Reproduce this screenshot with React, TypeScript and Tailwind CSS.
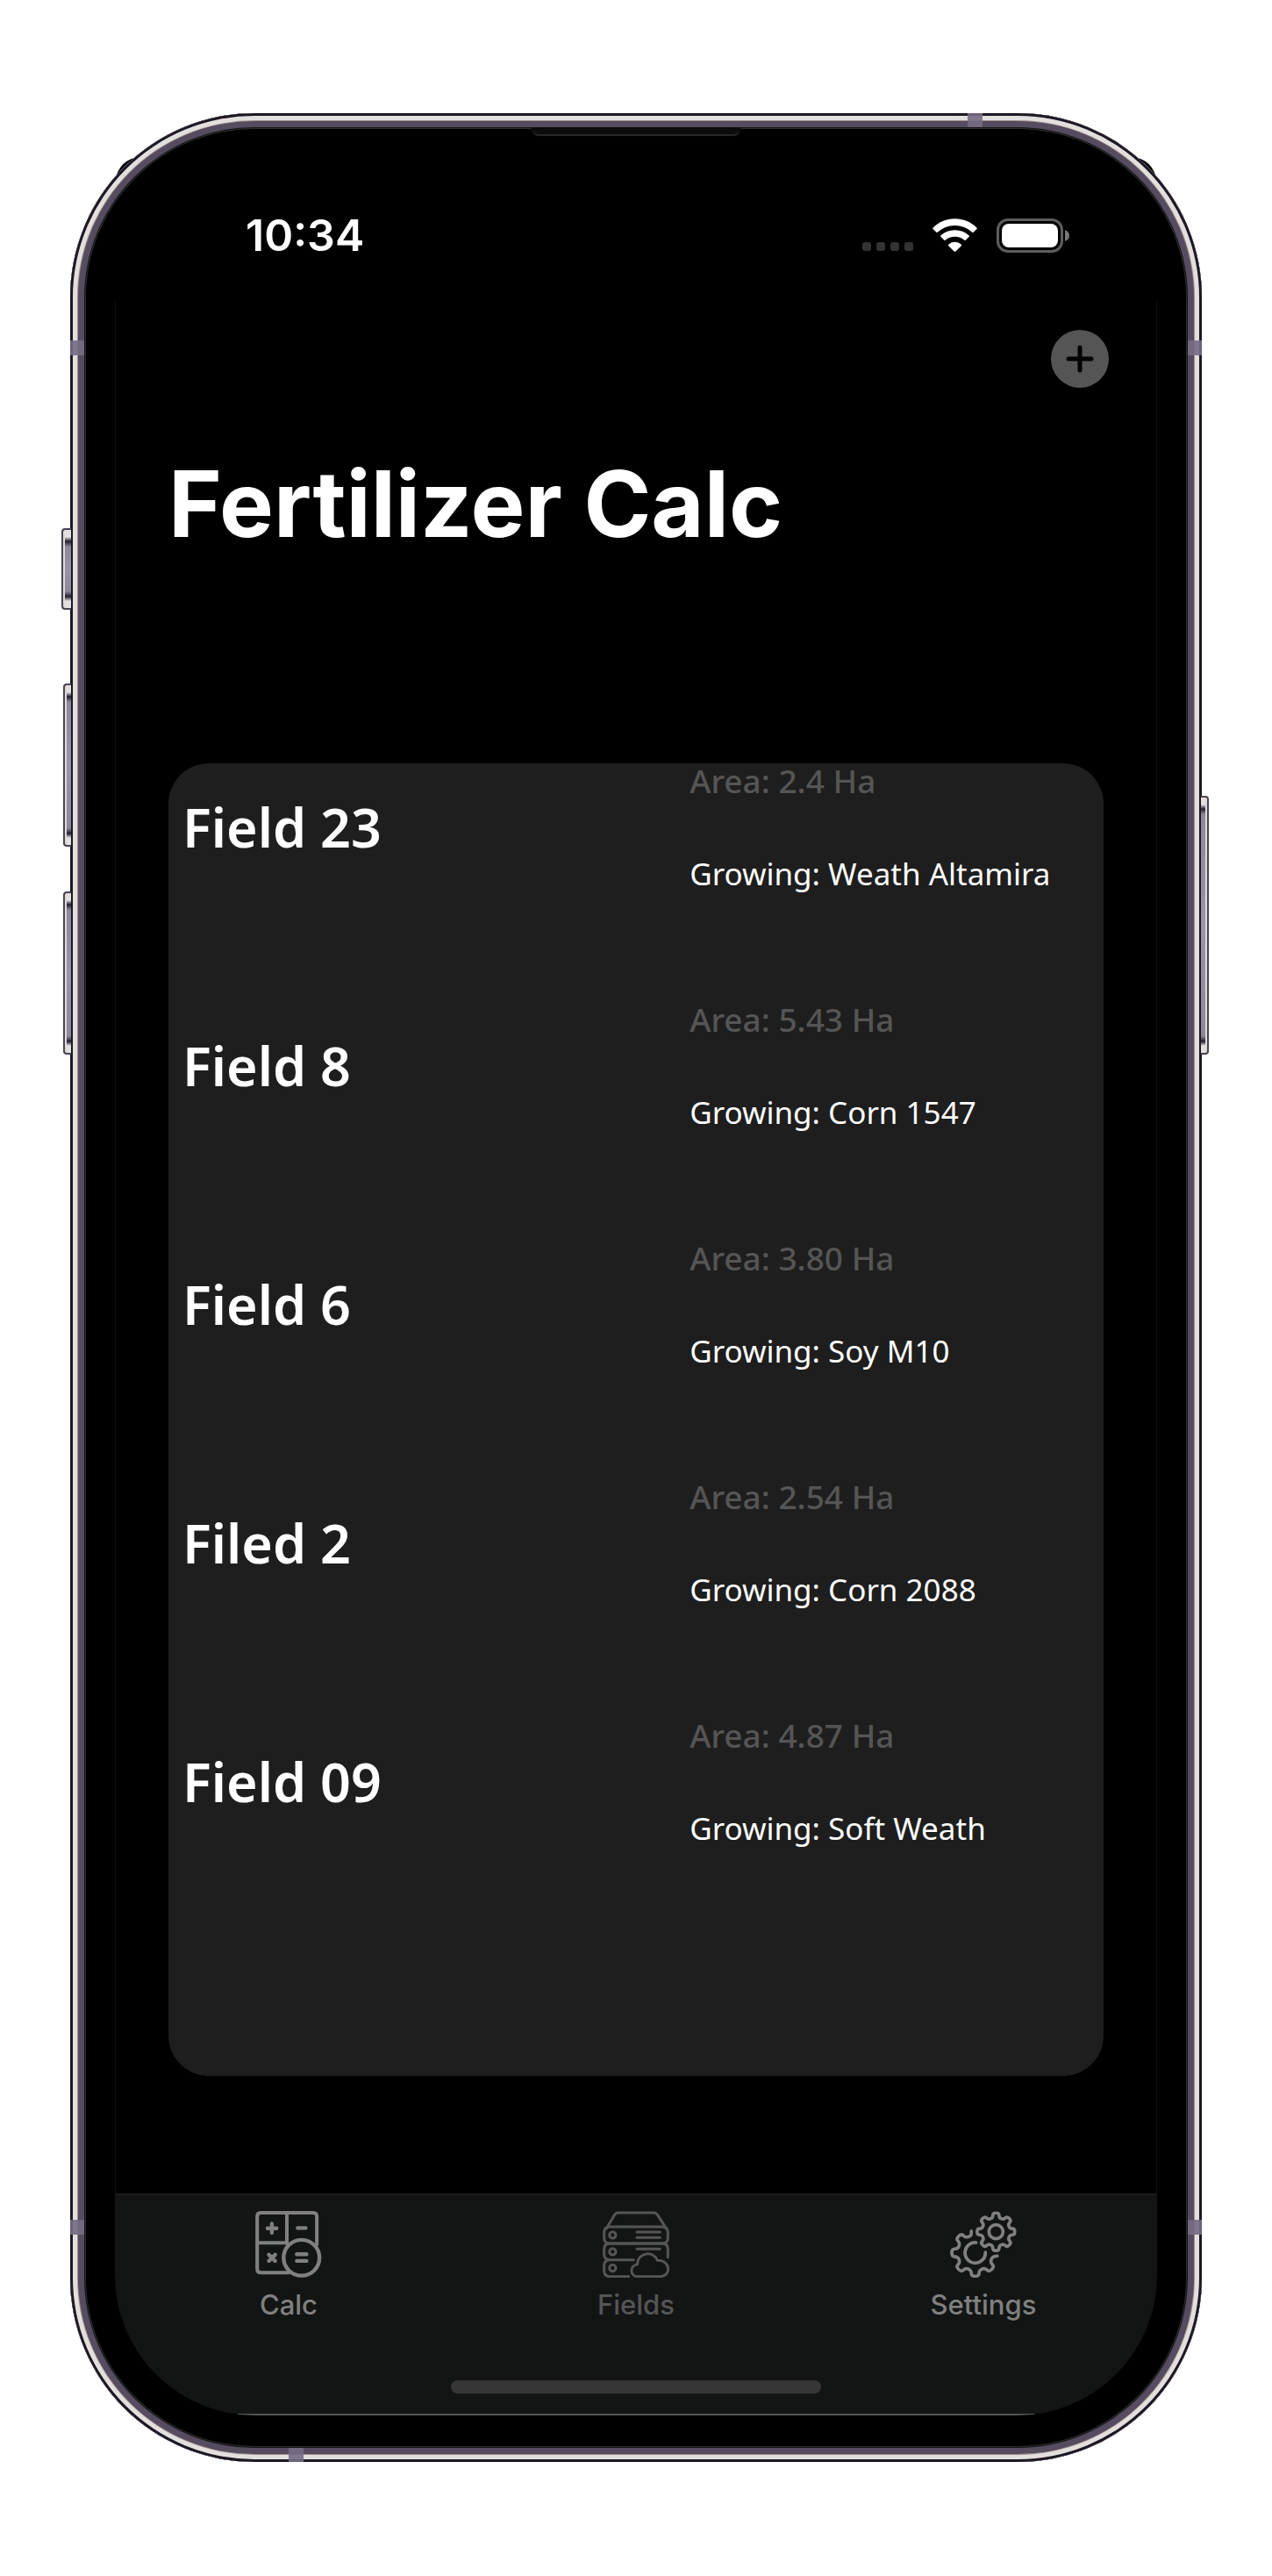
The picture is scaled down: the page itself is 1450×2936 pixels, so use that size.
import type { ReactNode } from "react";

type Point = [number, number];

const fields = [
  { name: "Field 23", area: "2.4", crop: "Weath Altamira" },
  { name: "Field 8", area: "5.43", crop: "Corn 1547" },
  { name: "Field 6", area: "3.80", crop: "Soy M10" },
  { name: "Filed 2", area: "2.54", crop: "Corn 2088" },
  { name: "Field 09", area: "4.87", crop: "Soft Weath" },
];

function polar(cx: number, cy: number, r: number, deg: number): Point {
  const a = (deg * Math.PI) / 180;
  return [cx + r * Math.cos(a), cy + r * Math.sin(a)];
}

// Joins the points with straight edges and rounds every corner.
function roundedPath(points: Point[], closed: boolean) {
  const n = points.length;
  const mix = (p: Point, q: Point, t: number): Point => [p[0] + (q[0] - p[0]) * t, p[1] + (q[1] - p[1]) * t];
  const str = (p: Point) => `${p[0].toFixed(2)} ${p[1].toFixed(2)}`;
  let d = "";
  for (let i = 0; i < n; i++) {
    const p = points[i];
    if (!closed && (i === 0 || i === n - 1)) {
      d += `${i === 0 ? "M" : "L"}${str(p)}`;
      continue;
    }
    const before = mix(p, points[(i - 1 + n) % n], 0.45);
    const after = mix(p, points[(i + 1) % n], 0.45);
    d += `${d === "" ? "M" : "L"}${str(before)}Q${str(p)} ${str(after)}`;
  }
  return closed ? d + "Z" : d;
}

function teeth(cx: number, cy: number, outer: number, inner: number, angles: number[]) {
  return angles.flatMap((a) => [
    polar(cx, cy, inner, a - 13),
    polar(cx, cy, outer, a - 9),
    polar(cx, cy, outer, a + 9),
    polar(cx, cy, inner, a + 13),
  ]);
}

const smallGear = roundedPath(teeth(177, 86, 65, 49, [0, 45, 90, 135, 180, 225, 270, 315]), true);
const largeGear = roundedPath(
  [
    polar(106, 158, 76, 8),
    polar(106, 158, 60, 13),
    ...teeth(106, 158, 81, 61, [45, 90, 135, 180, 225]),
    polar(106, 158, 60, 257),
    polar(106, 158, 76, 260),
  ],
  false,
);

function CalcIcon() {
  return (
    <svg viewBox="693 181 226 227" className="h-[76px] w-[76px]" fill="none" stroke="currentColor" strokeWidth="12" strokeLinecap="round" aria-hidden="true">
      <path d="M806 391H712Q699 391 699 378V200Q699 187 712 187H889Q902 187 902 200V296" />
      <path d="M800 187V292M699 289H801" />
      <circle cx="850" cy="340" r="61" strokeWidth="13" />
      <path d="M734 240H765M749 224V255M837 239H864M739 330L760 351M760 330L739 351M834 328H867M834 351H867" strokeWidth="13" />
    </svg>
  );
}

function FieldsIcon() {
  return (
    <svg viewBox="18 15 228 228" className="h-[76px] w-[76px]" fill="none" stroke="currentColor" strokeWidth="9" strokeLinecap="round" strokeLinejoin="round" aria-hidden="true">
      <path d="M31 74L58 29Q63 21 72 21H192Q201 21 206 29L235 74" />
      <path d="M40 69H224Q241 72 241 88V107Q241 124 224 126H40Q23 124 23 107V88Q23 72 40 69Z" />
      <path d="M124 182H40Q23 180 23 163V145Q23 128 40 126H224Q241 128 241 145V173" />
      <path d="M107 239H42Q23 239 23 220V201Q23 184 40 182" />
      <circle cx="52" cy="97" r="11" />
      <circle cx="52" cy="154" r="11" />
      <circle cx="52" cy="210" r="11" />
      <path d="M135 87H214M135 106H214M135 145H214" />
      <path d="M138 239C110 239 110 201 136 198C140 153 194 151 205 184C252 182 253 239 214 239Z" />
    </svg>
  );
}

function SettingsIcon() {
  return (
    <svg viewBox="20 15 228 228" className="h-[76px] w-[76px]" fill="none" stroke="currentColor" strokeWidth="11" strokeLinecap="round" strokeLinejoin="round" aria-hidden="true">
      <path d={smallGear} />
      <path d={largeGear} />
      <circle cx="177" cy="86" r="24" />
      <path d="M109 123A35 35 0 1 0 141 156" />
    </svg>
  );
}

function WifiIcon() {
  return (
    <svg viewBox="0 0 153 114" className="h-[38px] w-[51px]" fill="white" aria-hidden="true">
      <path d="M76.500 113.500 Q74.500 113.500 73 112L54 93Q52.500 91 54.500 89Q64 80 76.500 80Q89 80 98.500 89Q100.500 91 99 93L80 112Q78.500 113.500 76.500 113.500Z" />
      <path d="M28 62.500Q26 60.500 28 58.500Q48 39.500 76.500 39.500Q105 39.500 125 58.500Q127 60.500 125 62.500L113 74.500Q111.500 76 109.500 74.500Q95.500 62.500 76.500 62.500Q57.500 62.500 43.500 74.500Q41.500 76 40 74.500Z" />
      <path d="M1 35.500Q-.5 34 1.500 32Q32 1 76.500 1Q121 1 151.500 32Q153.500 34 152 35.500L139.500 47.500Q138 49 136 47.500Q111 24 76.500 24Q42 24 17 47.500Q15 49 13.500 47.500Z" />
    </svg>
  );
}

function Battery() {
  return (
    <span className="flex items-center gap-[2px]" role="img" aria-label="Battery full">
      <span className="h-[39px] w-[76px] rounded-[13px] border-[3px] border-[#5e5e5e] p-[3px]">
        <span className="block h-full rounded-[8px] bg-white" />
      </span>
      <svg viewBox="0 0 5 13" className="h-[13px] w-[5px]" fill="#777777" aria-hidden="true">
        <path d="M0 0Q5 2 5 6.500Q5 11 0 13Z" />
      </svg>
    </span>
  );
}

function Tab({ label, tone, children }: { label: string; tone: string; children: ReactNode }) {
  return (
    <button type="button" className={`flex flex-1 flex-col items-center gap-[10px] ${tone}`}>
      {children}
      <span className="text-[31px] leading-[42px] font-medium">{label}</span>
    </button>
  );
}

const leftKey =
  "absolute rounded-l-[4px] border-2 border-r-0 border-[#4a4550] bg-[linear-gradient(#e4e0df_0_8px,#221d2a_13px,#8d879a_19px,#9a93aa_50%,#8d879a_calc(100%-19px),#221d2a_calc(100%-13px),#e4e0df_calc(100%-8px))] shadow-[inset_2px_0_0_0_#dedadb]";

function Frame() {
  return (
    <div aria-hidden="true">
      <div className={`${leftKey} top-[473px] -left-[10px] h-[93px] w-[11px]`} />
      <div className={`${leftKey} top-[650px] -left-[8px] h-[186px] w-[9px]`} />
      <div className={`${leftKey} top-[887px] -left-[8px] h-[186px] w-[9px]`} />
      <div className="absolute top-[778px] -right-[8px] h-[295px] w-[9px] rounded-r-[4px] border-2 border-l-0 border-[#4a4550] bg-[linear-gradient(#e4e0df_0_8px,#221d2a_13px,#8d879a_19px,#9a93aa_50%,#8d879a_calc(100%-19px),#221d2a_calc(100%-13px),#e4e0df_calc(100%-8px))] shadow-[inset_-2px_0_0_0_#dedadb]" />
      <div className="absolute top-[259px] left-0 h-[17px] w-4 bg-[#766c84]/90" />
      <div className="absolute top-[259px] right-0 h-[17px] w-4 bg-[#766c84]/90" />
      <div className="absolute bottom-[259px] left-0 h-[17px] w-4 bg-[#766c84]/90" />
      <div className="absolute right-0 bottom-[259px] h-[17px] w-4 bg-[#766c84]/90" />
      <div className="absolute top-0 right-[250px] h-4 w-[17px] bg-[#766c84]/90" />
      <div className="absolute bottom-0 left-[249px] h-4 w-[17px] bg-[#766c84]/90" />
      <div className="absolute inset-x-0 top-4 flex justify-center">
        <div className="h-[10px] w-[238px] rounded-b-[8px] border-b-2 border-[#262626] bg-[#0c0c0c]" />
      </div>
    </div>
  );
}

export default function App() {
  return (
    <div className="min-h-screen bg-white px-20 py-[129px] font-[Inter,sans-serif]">
      <div className="relative">
        <div className="absolute inset-x-[52px] top-[50px] h-[200px] rounded-[28px] bg-black" aria-hidden="true" />
        <div className="relative rounded-[210px] bg-black px-[51px] pb-[53px] shadow-[inset_0_0_0_3px_#1d1824,inset_0_0_0_8px_#e2dfdd,inset_0_0_0_9px_#a3938f,inset_0_0_0_16px_#554c60,inset_0_0_0_17px_#131313,inset_0_0_0_18px_#2e2e2e]">
          <header className="flex h-[213px] items-end justify-between pr-[100px] pb-11 pl-[149px] text-white">
            <time className="text-[50px] leading-[60px] font-semibold">10:34</time>
            <div className="flex h-[60px] items-center">
              <span className="flex gap-[6px] pt-[26px]" role="img" aria-label="No signal">
                <span className="size-[10px] rounded-[3px] bg-[#333333]" />
                <span className="size-[10px] rounded-[3px] bg-[#333333]" />
                <span className="size-[10px] rounded-[3px] bg-[#333333]" />
                <span className="size-[10px] rounded-[3px] bg-[#333333]" />
              </span>
              <span className="mr-[22px] ml-[22px]">
                <WifiIcon />
              </span>
              <Battery />
            </div>
          </header>

          <main className="border-x border-[#0f0f0f] px-[60px] pt-[34px] pb-[134px]">
            <div className="flex justify-end">
              <button type="button" aria-label="Add field" className="-mr-[6px] flex size-[66px] items-center justify-center rounded-full bg-[#555555] text-black">
                <svg viewBox="0 0 32 32" className="size-8" stroke="currentColor" strokeWidth="5" strokeLinecap="round" aria-hidden="true">
                  <path d="M3 16H29M16 3V29" />
                </svg>
              </button>
            </div>
            <h1 className="mt-[76px] text-[104px] leading-[112px] font-bold text-white">Fertilizer Calc</h1>
            <ul className="mt-60 flex flex-col gap-[126px] rounded-[46px] bg-[#1e1e1e] pb-[262px] font-['Noto_Sans',sans-serif]">
              {fields.map((field) => (
                <li key={field.name} className="grid grid-cols-[5fr_4fr] items-center">
                  <h2 className="pl-4 text-[61px] leading-[72px] font-semibold text-white">{field.name}</h2>
                  <div className="flex flex-col gap-[66px] pl-[2px] leading-[40px]">
                    <p className="text-[37px] font-medium text-[#555555]">Area: {field.area} Ha</p>
                    <p className="text-[35px] text-white">Growing: {field.crop}</p>
                  </div>
                </li>
              ))}
            </ul>
          </main>

          <footer className="overflow-hidden rounded-b-[160px] border-t-2 border-[#1c1d1c] bg-[#131514]">
            <nav className="flex pt-[18px]" aria-label="Main">
              <Tab label="Calc" tone="text-[#808080]">
                <CalcIcon />
              </Tab>
              <Tab label="Fields" tone="text-[#555555]">
                <FieldsIcon />
              </Tab>
              <Tab label="Settings" tone="text-[#808080]">
                <SettingsIcon />
              </Tab>
            </nav>
            <div className="mx-auto mt-[65px] h-[15px] w-[422px] rounded-full bg-[#363636]" />
            <div className="mx-[140px] mt-[23px] h-[2px] bg-[#555555]" />
          </footer>
        </div>
        <Frame />
      </div>
    </div>
  );
}
